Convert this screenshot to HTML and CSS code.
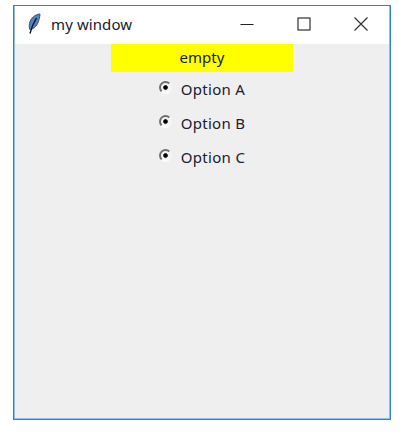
FILE: index.html
```html
<!DOCTYPE html>
<html lang="en">
<head>
    <meta charset="UTF-8">
    <meta name="viewport" content="width=device-width, initial-scale=1.0">
    <title>my window</title>
    <link rel="stylesheet" href="styles.css">
</head>
<body>
    <div class="window">
        <!-- Title bar -->
        <div class="titlebar">
            <svg class="feather" width="14" height="22" viewBox="0 0 14 22">
                <path d="M13 1 C8 1.500 3.500 5 2.500 10.500 C2 13 2.200 15 2.800 16.500 C7.500 16 11 11.500 12 6.500 C12.500 4.500 13 2.500 13 1 Z" fill="#4f82c8" stroke="#3a4f78" stroke-width="1"/>
                <path d="M9.500 5 C7 9 4.500 14 3 20.500" fill="none" stroke="#111" stroke-width="1.400"/>
            </svg>
            <span class="title">my window</span>
            <div class="controls">
                <svg width="14" height="14" viewBox="0 0 14 14"><path d="M0.500 7.500 H13.500" stroke="#222" stroke-width="1"/></svg>
                <svg width="14" height="14" viewBox="0 0 14 14"><rect x="1" y="1" width="12" height="12" fill="none" stroke="#333" stroke-width="1.200"/></svg>
                <svg width="14" height="14" viewBox="0 0 14 14"><path d="M0.500 0.500 L13.500 13.500 M13.500 0.500 L0.500 13.500" stroke="#333" stroke-width="1.200"/></svg>
            </div>
        </div>

        <div class="content">
            <div class="label">empty</div>
            <div class="option"><span class="radio"></span><span>Option A</span></div>
            <div class="option"><span class="radio"></span><span>Option B</span></div>
            <div class="option"><span class="radio"></span><span>Option C</span></div>
        </div>
    </div>
</body>
</html>
```

FILE: styles.css
```css
body {
    margin: 0;
    background: white;
    font-family: "Noto Sans", "Open Sans", sans-serif;
    font-size: 15px;
    color: #1a2030;
}

.window {
    width: 376px;
    height: 413px;
    margin: 5px 0 0 13px;
    border: 1px solid #2b80cf;
    box-shadow: inset 1px 0 0 #8fbfe8, inset 0 -1px 0 #8fbfe8, inset -1px 0 0 #8fbfe8;
    display: flex;
    flex-direction: column;
}

.titlebar {
    height: 38px;
    flex: none;
    display: flex;
    align-items: center;
    padding-left: 13px;
}

.feather {
    margin-right: 10px;
    margin-bottom: 2px;
}

.title {
    flex: 1;
    margin-bottom: 2px;
    letter-spacing: 0.1px;
}

.controls {
    display: flex;
    gap: 43px;
    margin-right: 22px;
    margin-bottom: 3px;
}

.content {
    flex: 1;
    margin: 0 1px 1px;
    background: #efefef;
    display: flex;
    flex-direction: column;
    align-items: center;
}

.label {
    width: 182px;
    height: 28px;
    line-height: 27px;
    text-align: center;
    background: #ffff00;
}

.option {
    height: 34px;
    display: flex;
    align-items: center;
    gap: 9px;
    letter-spacing: 0.3px;
}

.radio {
    width: 9px;
    height: 9px;
    margin-top: -3px;
    border: 2px solid;
    border-color: #6e6e6e #f6f6f6 #fbfbfb #6e6e6e;
    border-radius: 50%;
    background: radial-gradient(circle, #000 0, #000 1.800px, #f2f2f2 2.800px);
}
```
